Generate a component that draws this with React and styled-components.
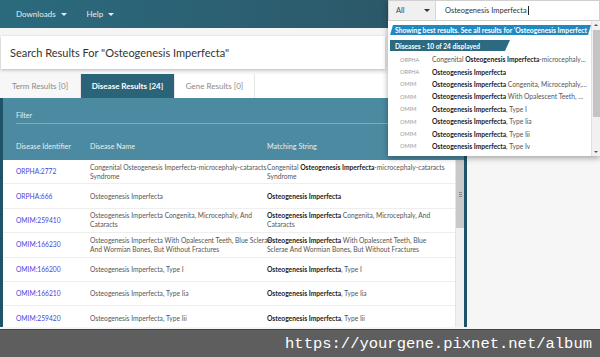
import styled, { createGlobalStyle } from "styled-components";

const GlobalStyle = createGlobalStyle`
  html, body {
    margin: 0;
    padding: 0;
    background: #f5f5f5;
    font-family: "Lato", "Open Sans", sans-serif;
  }
`;

const Page = styled.div`
  position: relative;
  width: 600px;
  height: 357px;
  overflow: hidden;
  display: flex;
  flex-direction: column;
  background: #f5f5f5;
`;

const TopBar = styled.header`
  height: 28px;
  flex-shrink: 0;
  display: flex;
  align-items: center;
  gap: 20px;
  padding-left: 16px;
  background: linear-gradient(90deg, #2b6a7e 0%, #2c5a6b 60%, #2a4d5d 100%);
`;

const NavItem = styled.span`
  display: flex;
  align-items: center;
  gap: 5px;
  color: #e6eef1;
  font-size: 8px;
`;

const Caret = styled.span`
  width: 0;
  height: 0;
  border-left: 3px solid transparent;
  border-right: 3px solid transparent;
  border-top: 3px solid ${(p) => p.$color || "#e6eef1"};
`;

const TitleCard = styled.div`
  margin: 8px 215px 0 1px;
  height: 33px;
  flex-shrink: 0;
  display: flex;
  align-items: center;
  padding-left: 9px;
  background: #fff;
  box-shadow: 0 1px 3px rgba(0, 0, 0, 0.25);
  font-size: 11px;
  color: #333;
`;

const Body = styled.div`
  display: flex;
  margin-top: 5px;
  height: 253px;
  flex-shrink: 0;
`;

const LeftCol = styled.div`
  width: 467px;
  display: flex;
  flex-direction: column;
`;

const Tabs = styled.div`
  display: flex;
  height: 24px;
  width: 388px;
  flex-shrink: 0;
  background: #fff;
`;

const Tab = styled.div`
  display: flex;
  align-items: center;
  justify-content: center;
  width: ${(p) => p.$w}px;
  font-size: 8px;
  color: ${(p) => (p.$active ? "#fff" : "#8a8a8a")};
  font-weight: ${(p) => (p.$active ? 700 : 400)};
  background: ${(p) => (p.$active ? "#2b6479" : p.$muted ? "#f7f7f7" : "#fff")};
  border-right: 1px solid #e6e6e6;
`;

const Panel = styled.div`
  flex: 1;
  display: flex;
  flex-direction: column;
  background: #4b8aa0;
  border-left: 3px solid #1e536a;
  border-right: 3px solid #1e536a;
  overflow: hidden;
`;

const FilterRow = styled.div`
  margin: 13px 10px 0 13px;
  padding-bottom: 4px;
  border-bottom: 1px solid #80aec0;
  font-size: 7px;
  color: #e3eef2;
`;

const Grid = styled.div`
  display: grid;
  grid-template-columns: 74px 177px 1fr;
  padding-left: 13px;
`;

const HeadRow = styled(Grid)`
  height: 36px;
  flex-shrink: 0;
  align-items: end;
  padding-bottom: 9px;
  box-sizing: border-box;
  font-size: 7.2px;
  color: #e6eff2;
`;

const TableWrap = styled.div`
  flex: 1;
  display: flex;
  background: #fff;
  min-height: 0;
`;

const Rows = styled.div`
  flex: 1;
`;

const Row = styled(Grid)`
  height: 24.4px;
  box-sizing: border-box;
  align-items: center;
  border-bottom: 1.5px solid #eeeeee;
  font-size: 6.7px;
  line-height: 9px;
  color: #555;
`;

const IdLink = styled.a`
  color: #4646dc;
  text-decoration: none;
`;

const Cell = styled.div`
  white-space: nowrap;
`;

const Strong = styled.b`
  color: #222;
  font-weight: 700;
`;

const Scrollbar = styled.div`
  width: 8px;
  background: #f1f1f1;
  border-left: 1px solid #e4e4e4;
  display: flex;
  flex-direction: column;
`;

const Thumb = styled.div`
  height: ${(p) => p.$h}px;
  background: #c9c9c9;
  display: flex;
  align-items: center;
  justify-content: center;
`;

const Grip = styled.div`
  width: 3px;
  height: 5px;
  border-top: 1px solid #888;
  border-bottom: 1px solid #888;
  box-sizing: border-box;
  position: relative;
  &::after {
    content: "";
    position: absolute;
    left: 0;
    right: 0;
    top: 1px;
    border-top: 1px solid #888;
  }
`;

const RightCol = styled.div`
  flex: 1;
  background: #f6f6f6;
`;

const Footer = styled.footer`
  margin-top: 2px;
  flex: 1;
  background: #5e5e5e;
  border-top: 1px solid #444;
  display: flex;
  align-items: center;
  justify-content: flex-end;
  padding-right: 8px;
  color: #fff;
  font-family: "Liberation Mono", monospace;
  font-size: 15.5px;
`;

/* search dropdown overlay */
const Search = styled.div`
  position: absolute;
  top: 0;
  right: 0;
  width: 212px;
  height: 156px;
  background: #fff;
  box-shadow: 0 2px 6px rgba(0, 0, 0, 0.35);
  display: flex;
  flex-direction: column;
`;

const SearchBar = styled.div`
  display: flex;
  height: 21px;
  flex-shrink: 0;
  border: 1px solid #d0d0d0;
  box-sizing: border-box;
`;

const Scope = styled.div`
  width: 47px;
  display: flex;
  align-items: center;
  justify-content: space-between;
  padding: 0 5px 0 7px;
  box-sizing: border-box;
  background: #f0f0f0;
  border-right: 1px solid #d6d6d6;
  font-size: 7.5px;
  color: #444;
`;

const Query = styled.div`
  flex: 1;
  display: flex;
  align-items: center;
  padding-left: 9px;
  font-size: 7.5px;
  color: #333;
  &::after {
    content: "";
    width: 1px;
    height: 9px;
    background: #222;
    margin-left: 1px;
  }
`;

const DropBody = styled.div`
  flex: 1;
  display: flex;
  min-height: 0;
`;

const DropList = styled.div`
  flex: 1;
  min-width: 0;
  display: flex;
  flex-direction: column;
  padding-top: 4px;
`;

const BestBanner = styled.div`
  height: 10px;
  flex-shrink: 0;
  margin-left: 2px;
  padding-left: 5px;
  display: flex;
  align-items: center;
  background: #2089c2;
  color: #fff;
  font-weight: 700;
  font-size: 6.8px;
  white-space: nowrap;
  overflow: hidden;
  clip-path: polygon(3px 0, 100% 0, calc(100% - 3px) 100%, 0 100%);
`;

const GroupBanner = styled.div`
  width: 120px;
  height: 11px;
  flex-shrink: 0;
  margin: 5px 0 2px 2px;
  padding-left: 5px;
  box-sizing: border-box;
  display: flex;
  align-items: center;
  background: #2b6a80;
  color: #fff;
  font-weight: 700;
  font-size: 6.6px;
  clip-path: polygon(0 0, 100% 0, calc(100% - 5px) 100%, 0 100%);
`;

const Item = styled.div`
  height: 12.4px;
  flex-shrink: 0;
  display: flex;
  align-items: center;
  white-space: nowrap;
  overflow: hidden;
`;

const Source = styled.span`
  width: 32px;
  padding-left: 12px;
  flex-shrink: 0;
  font-size: 5.6px;
  color: #9a9a9a;
`;

const ItemText = styled.span`
  font-size: 6.7px;
  color: #555;
  overflow: hidden;
  text-overflow: ellipsis;
  max-width: 155px;
`;

const DropScroll = styled.div`
  width: 8px;
  flex-shrink: 0;
  background: #f1f1f1;
  border-left: 1px solid #e0e0e0;
  display: flex;
  flex-direction: column;
  align-items: center;
`;

const Arrow = styled.span`
  margin: ${(p) => (p.$down ? "auto 0 3px" : "3px 0 0")};
  width: 0;
  height: 0;
  border-left: 2px solid transparent;
  border-right: 2px solid transparent;
  ${(p) =>
    p.$down ? "border-top: 2px solid #555;" : "border-bottom: 2px solid #555;"}
`;

const DropThumb = styled.div`
  width: 7px;
  height: 87px;
  margin-top: 4px;
  background: #c4c4c4;
`;

const rows = [
  {
    id: "ORPHA:2772",
    name: ["Congenital Osteogenesis Imperfecta-microcephaly-cataracts", "Syndrome"],
    pre: "Congenital ",
    post: ["-microcephaly-cataracts", "Syndrome"],
  },
  { id: "ORPHA:666", name: ["Osteogenesis Imperfecta"], pre: "", post: [""] },
  {
    id: "OMIM:259410",
    name: ["Osteogenesis Imperfecta Congenita, Microcephaly, And", "Cataracts"],
    pre: "",
    post: [" Congenita, Microcephaly, And", "Cataracts"],
  },
  {
    id: "OMIM:166230",
    name: [
      "Osteogenesis Imperfecta With Opalescent Teeth, Blue Sclerae",
      "And Wormian Bones, But Without Fractures",
    ],
    pre: "",
    post: [" With Opalescent Teeth, Blue", "Sclerae And Wormian Bones, But Without Fractures"],
  },
  { id: "OMIM:166200", name: ["Osteogenesis Imperfecta, Type I"], pre: "", post: [", Type I"] },
  { id: "OMIM:166210", name: ["Osteogenesis Imperfecta, Type Iia"], pre: "", post: [", Type Iia"] },
  { id: "OMIM:259420", name: ["Osteogenesis Imperfecta, Type Iii"], pre: "", post: [", Type Iii"] },
];

const suggestions = [
  { src: "ORPHA", pre: "Congenital ", post: "-microcephaly-cataracts Syndrome" },
  { src: "ORPHA", pre: "", post: "" },
  { src: "OMIM", pre: "", post: " Congenita, Microcephaly, And Cataracts" },
  { src: "OMIM", pre: "", post: " With Opalescent Teeth, Blue Sclerae" },
  { src: "OMIM", pre: "", post: ", Type I" },
  { src: "OMIM", pre: "", post: ", Type Iia" },
  { src: "OMIM", pre: "", post: ", Type Iii" },
  { src: "OMIM", pre: "", post: ", Type Iv" },
];

const TERM = "Osteogenesis Imperfecta";

function Lines({ lines }) {
  return lines.map((l, i) => (
    <span key={i}>
      {i > 0 && <br />}
      {l}
    </span>
  ));
}

export default function App() {
  return (
    <Page>
      <GlobalStyle />
      <TopBar>
        <NavItem>
          Downloads <Caret />
        </NavItem>
        <NavItem>
          Help <Caret />
        </NavItem>
      </TopBar>

      <TitleCard>Search Results For "Osteogenesis Imperfecta"</TitleCard>

      <Body>
        <LeftCol>
          <Tabs>
            <Tab $w={80} $muted>Term Results [0]</Tab>
            <Tab $w={93} $active>Disease Results [24]</Tab>
            <Tab $w={79}>Gene Results [0]</Tab>
          </Tabs>
          <Panel>
            <FilterRow>Filter</FilterRow>
            <HeadRow>
              <span>Disease Identifier</span>
              <span>Disease Name</span>
              <span>Matching String</span>
            </HeadRow>
            <TableWrap>
              <Rows>
                {rows.map((r) => (
                  <Row key={r.id}>
                    <IdLink href="#">{r.id}</IdLink>
                    <Cell>
                      <Lines lines={r.name} />
                    </Cell>
                    <Cell>
                      {r.pre}
                      <Strong>{TERM}</Strong>
                      <Lines lines={r.post} />
                    </Cell>
                  </Row>
                ))}
              </Rows>
              <Scrollbar>
                <Thumb $h={68}>
                  <Grip />
                </Thumb>
              </Scrollbar>
            </TableWrap>
          </Panel>
        </LeftCol>
        <RightCol />
      </Body>

      <Footer>https://yourgene.pixnet.net/album</Footer>

      <Search>
        <SearchBar>
          <Scope>
            All <Caret $color="#333" />
          </Scope>
          <Query>Osteogenesis Imperfecta</Query>
        </SearchBar>
        <DropBody>
          <DropList>
            <BestBanner>
              Showing best results. See all results for 'Osteogenesis Imperfect
            </BestBanner>
            <GroupBanner>Diseases - 10 of 24 displayed</GroupBanner>
            {suggestions.map((s, i) => (
              <Item key={i}>
                <Source>{s.src}</Source>
                <ItemText>
                  {s.pre}
                  <Strong>{TERM}</Strong>
                  {s.post}
                </ItemText>
              </Item>
            ))}
          </DropList>
          <DropScroll>
            <Arrow />
            <DropThumb />
            <Arrow $down />
          </DropScroll>
        </DropBody>
      </Search>
    </Page>
  );
}
